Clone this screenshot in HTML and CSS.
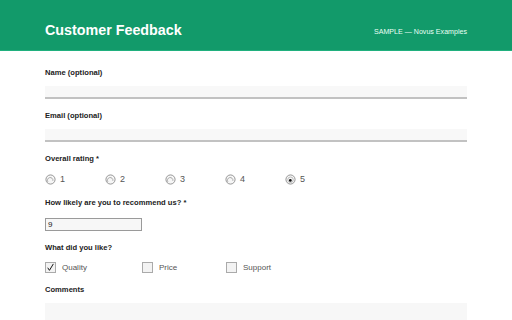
FILE: index.html
```html
<!DOCTYPE html>
<html>
<head>
<meta charset="utf-8">
<link rel="stylesheet" href="styles.css">
</head>
<body>
<header class="topbar">
  <h1 class="title">Customer Feedback</h1>
  <span class="meta">SAMPLE — Novus Examples</span>
</header>
<main class="form">
  <div class="field">
    <label class="label">Name (optional)</label>
    <div class="text-input"></div>
  </div>
  <div class="field">
    <label class="label">Email (optional)</label>
    <div class="text-input"></div>
  </div>
  <div class="field">
    <label class="label">Overall rating *</label>
    <div class="radios">
      <span class="opt"><svg class="radio" viewBox="0 0 12 12" width="11" height="11"><circle cx="6" cy="6" r="5" fill="#f6f6f6" stroke="#8d8d8d" stroke-width="1"/><path d="M3.2 8.6 A3 3 0 1 1 8.6 7.4" fill="none" stroke="#9a9a9a" stroke-width="0.9"/></svg>1</span>
      <span class="opt"><svg class="radio" viewBox="0 0 12 12" width="11" height="11"><circle cx="6" cy="6" r="5" fill="#f6f6f6" stroke="#8d8d8d" stroke-width="1"/><path d="M3.2 8.6 A3 3 0 1 1 8.6 7.4" fill="none" stroke="#9a9a9a" stroke-width="0.9"/></svg>2</span>
      <span class="opt"><svg class="radio" viewBox="0 0 12 12" width="11" height="11"><circle cx="6" cy="6" r="5" fill="#f6f6f6" stroke="#8d8d8d" stroke-width="1"/><path d="M3.2 8.6 A3 3 0 1 1 8.6 7.4" fill="none" stroke="#9a9a9a" stroke-width="0.9"/></svg>3</span>
      <span class="opt"><svg class="radio" viewBox="0 0 12 12" width="11" height="11"><circle cx="6" cy="6" r="5" fill="#f6f6f6" stroke="#8d8d8d" stroke-width="1"/><path d="M3.2 8.6 A3 3 0 1 1 8.6 7.4" fill="none" stroke="#9a9a9a" stroke-width="0.9"/></svg>4</span>
      <span class="opt"><svg class="radio" viewBox="0 0 12 12" width="11" height="11"><circle cx="6" cy="6" r="5" fill="#f6f6f6" stroke="#8d8d8d" stroke-width="1"/><circle cx="6" cy="6.3" r="3" fill="none" stroke="#aaa" stroke-width="0.8"/><circle cx="5.8" cy="7" r="1.5" fill="#111"/></svg>5</span>
    </div>
  </div>
  <div class="field">
    <label class="label label-wide">How likely are you to recommend us? *</label>
    <div class="num-input">9</div>
  </div>
  <div class="field">
    <label class="label">What did you like?</label>
    <div class="checks">
      <span class="copt w1"><span class="box"><svg viewBox="0 0 12 12" width="11" height="11"><path d="M2.3 6.3 L4.6 9.8 L9.8 1.2" fill="none" stroke="#111" stroke-width="1.3"/></svg></span>Quality</span>
      <span class="copt w2"><span class="box"></span>Price</span>
      <span class="copt"><span class="box"></span>Support</span>
    </div>
  </div>
  <div class="field">
    <label class="label">Comments</label>
    <div class="textarea"></div>
  </div>
</main>
</body>
</html>
```
FILE: styles.css
```css
* { box-sizing: border-box; }
body {
  margin: 0;
  font-family: "Liberation Sans", Arial, sans-serif;
  background: #fff;
  overflow: hidden;
  height: 320px;
}
.topbar {
  height: 51px;
  background: #129a6a;
  border-bottom: 1px solid #20b07e;
  display: flex;
  align-items: center;
  justify-content: space-between;
  padding: 0 45px;
}
.title {
  margin: 0;
  color: #fff;
  font-size: 14.3px;
  font-weight: bold;
  padding-top: 10px;
}
.meta {
  color: #eafff5;
  font-size: 7.1px;
  padding-top: 13px;
}
.form {
  padding: 17px 45px 0;
  display: flex;
  flex-direction: column;
}
.field {
  display: flex;
  flex-direction: column;
  margin-bottom: 12px;
}
.label {
  font-size: 7.6px;
  font-weight: bold;
  color: #222;
  line-height: 10px;
  margin-bottom: 8px;
}
.label-wide { margin-bottom: 10px; }
.text-input {
  height: 13px;
  background: #f8f8f8;
  border-bottom: 2px solid #c2c2c2;
}
.radios {
  display: flex;
  height: 14px;
  align-items: center;
}
.opt {
  width: 60px;
  display: flex;
  align-items: center;
  font-size: 9px;
  color: #555;
}
.radio {
  margin-right: 4px;
  flex: none;
}
.num-input {
  width: 97px;
  height: 13px;
  border: 1px solid #9a9a9a;
  background: #f7f7f7;
  font-size: 8px;
  color: #222;
  padding: 1px 2px;
  line-height: 9px;
}
.checks {
  display: flex;
  align-items: center;
  height: 12px;
}
.copt {
  display: flex;
  align-items: center;
  font-size: 8px;
  color: #555;
}
.w1 { width: 97px; }
.w2 { width: 84px; }
.box {
  width: 11px;
  height: 11px;
  border: 1px solid #aaa;
  background: #f3f3f3;
  margin-right: 6px;
  display: flex;
  align-items: center;
  justify-content: center;
}
.textarea {
  height: 40px;
  background: #f7f7f7;
}
```
